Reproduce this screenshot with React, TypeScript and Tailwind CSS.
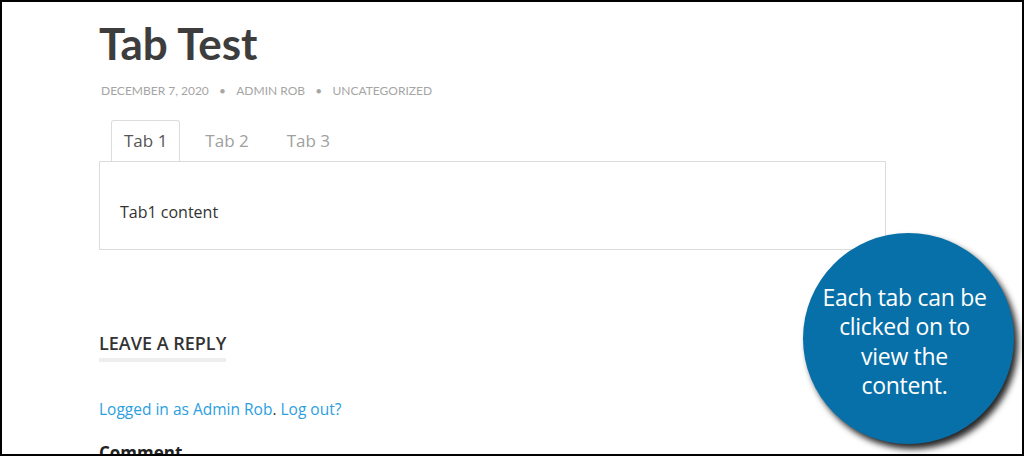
import React from 'react';

const tabs = ['Tab 1', 'Tab 2', 'Tab 3'];

const App: React.FC = () => {
  const active = 0;
  return (
    <div className="relative w-[1024px] h-[456px] overflow-hidden bg-white border-2 border-black font-['Open_Sans',sans-serif]">
      <div className="pl-[97px] w-[884px]">
        {/* Post header */}
        <h1 className="mt-[15px] text-[44px] leading-[52px] font-bold text-[#3d3d3d] tracking-[0px] font-['Lato',sans-serif]">
          Tab Test
        </h1>
        <div className="mt-[13px] flex items-center gap-[11px] pl-[2px] text-[12px] text-[#a5a5a5] uppercase font-['Lato',sans-serif]">
          <span>December 7, 2020</span>
          <span className="text-[9px]">●</span>
          <span>Admin Rob</span>
          <span className="text-[9px]">●</span>
          <span>Uncategorized</span>
        </div>

        {/* Tabs */}
        <div className="mt-[20px] flex pl-[12px]">
          {tabs.map((t, i) => (
            <div
              key={t}
              className={
                i === active
                  ? 'h-[41px] px-[12px] flex items-center border border-b-0 border-[#dcdcdc] rounded-t-[3px] bg-white text-[17px] text-[#555] -mb-px relative z-10'
                  : 'h-[41px] px-[13px] ml-[12px] flex items-center text-[17px] text-[#a0a0a0]'
              }
            >
              {t}
            </div>
          ))}
        </div>
        <div className="h-[89px] border border-[#dcdcdc] pl-[20px] flex items-center text-[16px] text-[#333] pt-[13px]">
          Tab1 content
        </div>

        {/* Reply */}
        <div className="mt-[82px] inline-block">
          <h3 className="text-[18px] font-semibold text-[#333] uppercase leading-[22px]">
            Leave a Reply
          </h3>
          <div className="mt-[4px] h-[4px] bg-[#eeeeee]" />
        </div>
        <p className="mt-[36px] text-[15.5px] text-[#2ba0e0]">
          Logged in as Admin Rob<span className="text-[#333]">.</span> Log out?
        </p>
        <p className="mt-[19px] text-[17px] font-bold text-[#222]">Comment</p>
      </div>

      {/* Callout */}
      <div className="absolute left-[801px] top-[231px] w-[211px] h-[211px] rounded-full bg-[#0870a8] shadow-[4px_5px_6px_rgba(0,0,0,0.85)] flex items-center justify-center text-center">
        <p className="mt-[6px] mr-[8px] text-white text-[23px] leading-[29.5px] font-['Open_Sans',sans-serif] tracking-[-0.3px]">
          Each tab can be
          <br />
          clicked on to
          <br />
          view the
          <br />
          content.
        </p>
      </div>
    </div>
  );
};

export default App;
